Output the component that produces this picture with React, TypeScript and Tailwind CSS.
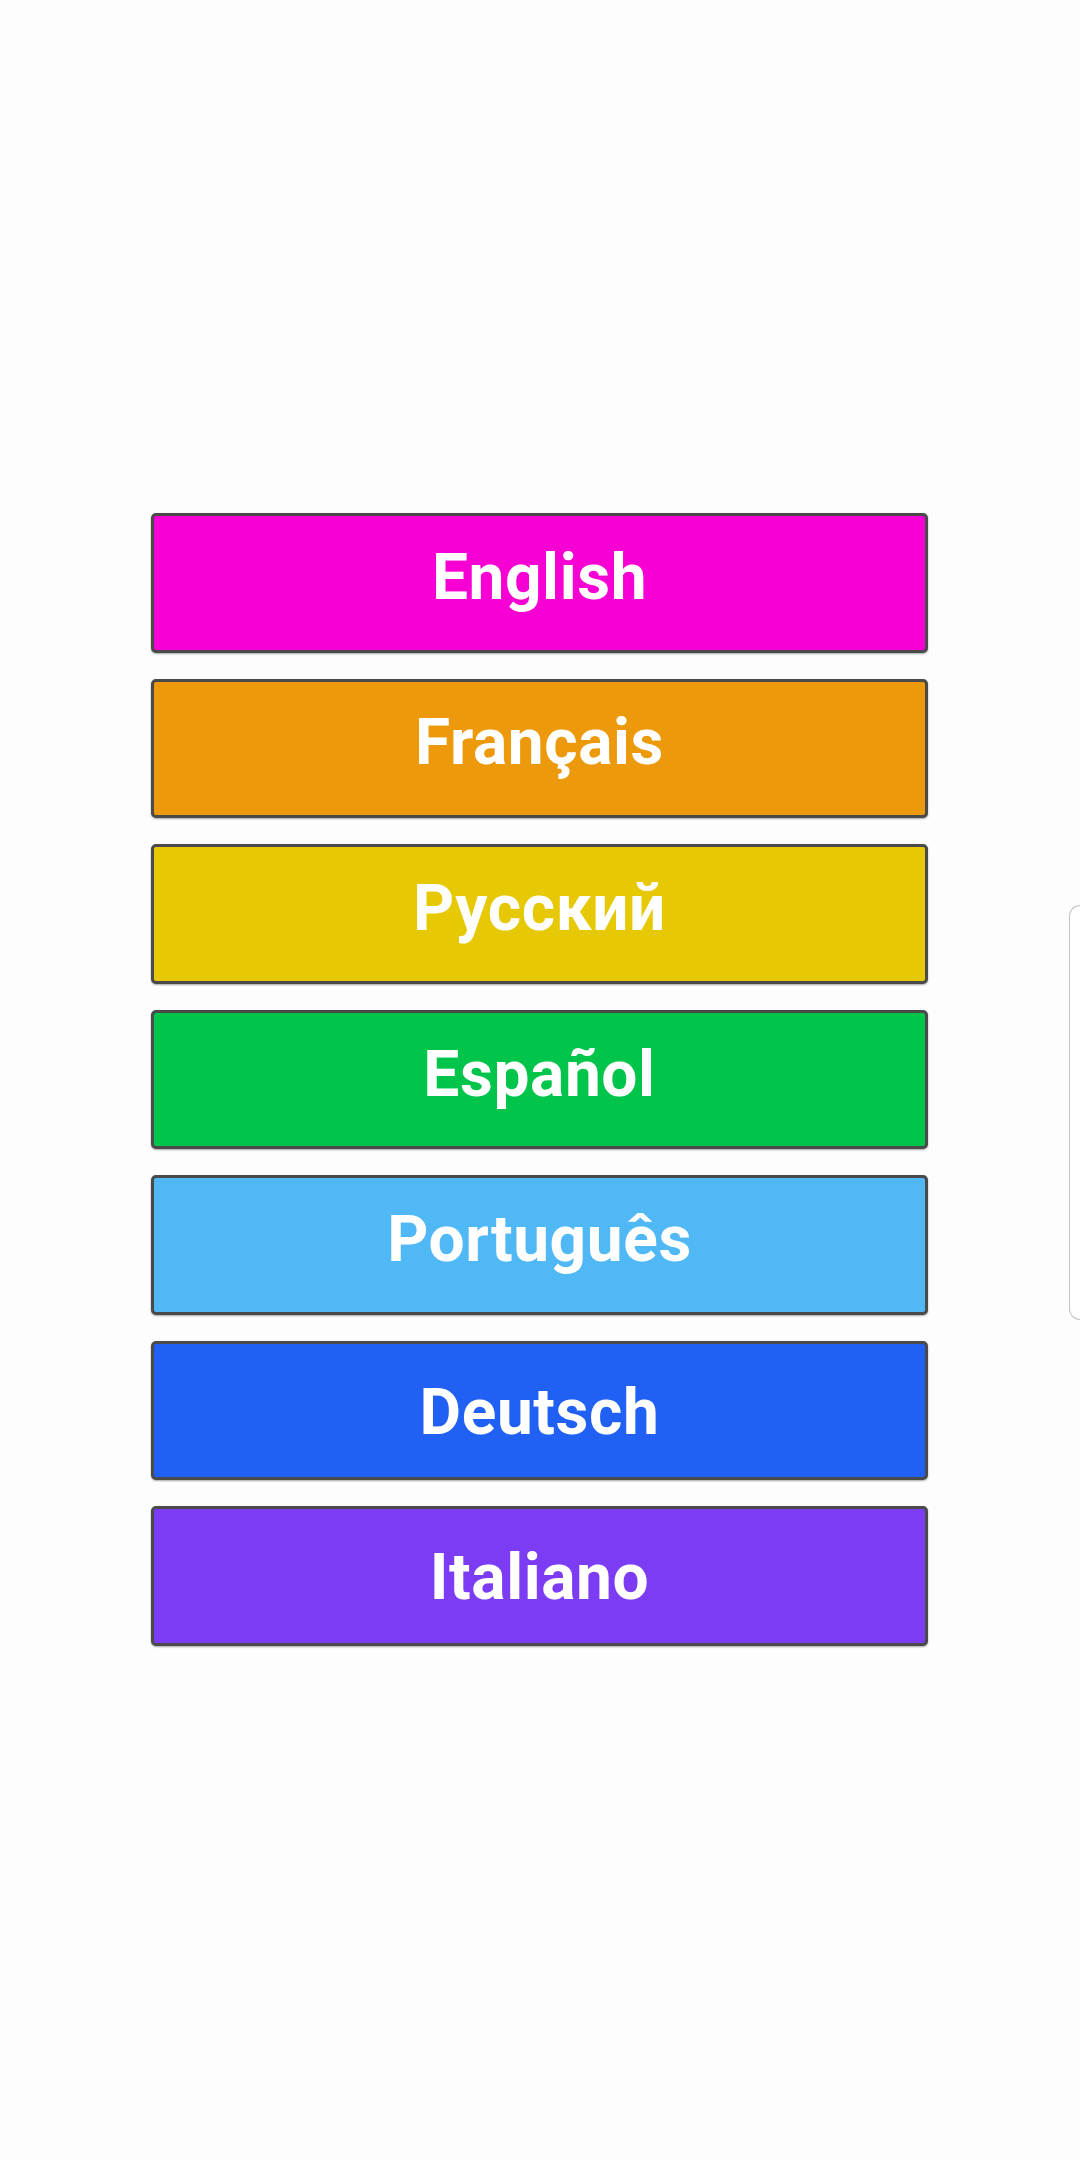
import { useState } from 'react';

interface LanguageOption {
    label: string;
    code: string;
    className: string;
}

// last two rows sit their label a little lower, as in the app
const languages: LanguageOption[] = [
    { label: 'English', code: 'en', className: 'bg-[#f600d3] pb-[10px]' },
    { label: 'Français', code: 'fr', className: 'bg-[#ec9a0c] pb-[10px]' },
    { label: 'Русский', code: 'ru', className: 'bg-[#e6c904] pb-[9px]' },
    { label: 'Español', code: 'es', className: 'bg-[#01c44b] pb-[9px]' },
    { label: 'Português', code: 'pt', className: 'bg-[#51b8f6] pb-[10px]' },
    { label: 'Deutsch', code: 'de', className: 'bg-[#2060f3] pt-[5px]' },
    { label: 'Italiano', code: 'it', className: 'bg-[#7c3cf4] pt-[4px]' },
];

function LanguageButton({
    option,
    onSelect,
}: {
    option: LanguageOption;
    onSelect: (code: string) => void;
}) {
    return (
        <button
            type="button"
            onClick={() => onSelect(option.code)}
            className={`w-[777px] h-[139.5px] flex items-center justify-center rounded-[5px] border-[3px] border-[#4a4a4a] shadow-[0_1px_2px_rgba(0,0,0,0.35)] text-white text-[64px] font-bold tracking-[0.6px] leading-none ${option.className}`}
        >
            {option.label}
        </button>
    );
}

export default function App() {
    const [, setLang] = useState<string>('en');

    return (
        <div
            className="relative w-[1080px] h-[2160px] bg-[#fdfdfd] overflow-hidden"
            style={{ fontFamily: 'Roboto, "Noto Sans", sans-serif' }}
        >
            <div className="flex flex-col items-start pl-[151px] pt-[513px] gap-[26px]">
                {languages.map((option) => (
                    <LanguageButton
                        key={option.code}
                        option={option}
                        onSelect={setLang}
                    />
                ))}
            </div>

            {/* edge panel handle */}
            <div className="absolute right-0 top-[905px] w-[11px] h-[415px] rounded-l-[14px] border border-r-0 border-[#c4c4c4] bg-white" />
        </div>
    );
}
